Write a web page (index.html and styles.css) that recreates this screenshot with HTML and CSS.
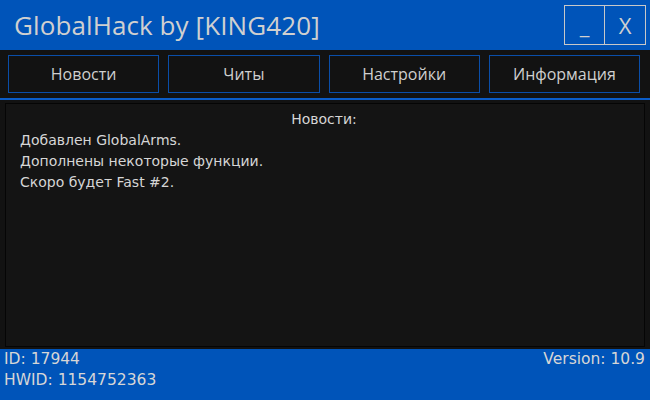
FILE: index.html
```html
<!DOCTYPE html>
<html lang="ru">
<head>
<meta charset="utf-8">
<title>GlobalHack</title>
<link rel="stylesheet" href="styles.css">
</head>
<body>
<div class="app">
  <header class="titlebar">
    <div class="title">GlobalHack by [KING420]</div>
    <div class="winbtns">
      <div class="winbtn">_</div>
      <div class="winbtn">X</div>
    </div>
  </header>
  <nav class="nav">
    <div class="tab">Новости</div>
    <div class="tab">Читы</div>
    <div class="tab">Настройки</div>
    <div class="tab">Информация</div>
  </nav>
  <main class="content">
    <div class="panel">
      <div class="panel-title">Новости:</div>
      <div class="line">Добавлен GlobalArms.</div>
      <div class="line">Дополнены некоторые функции.</div>
      <div class="line">Скоро будет Fast #2.</div>
    </div>
  </main>
  <footer class="footer">
    <div class="footer-left">
      <div>ID: 17944</div>
      <div>HWID: 1154752363</div>
    </div>
    <div class="footer-right">Version: 10.9</div>
  </footer>
</div>
</body>
</html>
```
FILE: styles.css
```css
html, body {
  margin: 0;
  padding: 0;
  background: #121212;
}
body {
  font-family: "DejaVu Sans", Verdana, sans-serif;
  color: #d4d4d4;
}
.app {
  width: 650px;
  height: 400px;
  display: flex;
  flex-direction: column;
  background: #121212;
}
.titlebar {
  height: 50px;
  background: #0054b9;
  display: flex;
  justify-content: space-between;
  align-items: flex-start;
  box-sizing: border-box;
  padding: 5px 4px 0 14px;
}
.title {
  font-family: "Open Sans", "Noto Sans", sans-serif;
  font-size: 26px;
  color: #d0d0d0;
  line-height: 40px;
  letter-spacing: 0.1px;
}
.winbtns {
  display: flex;
}
.winbtn {
  width: 41px;
  height: 40px;
  box-sizing: border-box;
  border: 1px solid #c8c8c8;
  display: flex;
  align-items: center;
  justify-content: center;
  font-family: "Open Sans", "Noto Sans", sans-serif;
  font-size: 22px;
  color: #d0d0d0;
}
.winbtn + .winbtn {
  border-left: none;
}
.nav {
  height: 50px;
  box-sizing: border-box;
  padding: 5px 10px 5px 8px;
  display: grid;
  grid-template-columns: repeat(4, 1fr);
  column-gap: 9px;
  border-bottom: 2px solid #0a5cc8;
}
.tab {
  border: 1px solid #0a4ea8;
  background: #121212;
  display: flex;
  align-items: center;
  justify-content: center;
  font-family: "Open Sans", "Noto Sans", sans-serif;
  font-size: 16px;
  color: #cfcfcf;
}
.content {
  flex: 1;
  padding: 3px 5px 2px 5px;
  display: flex;
}
.panel {
  flex: 1;
  border: 1px solid #050505;
  background: #141414;
  padding: 5px 14px 4px;
  font-size: 14px;
  line-height: 21px;
  color: #d6d6d6;
}
.panel-title {
  text-align: center;
  margin-right: 2px;
}
.footer {
  height: 51px;
  background: #0054b9;
  box-sizing: border-box;
  padding: 0 5px 0 4px;
  display: flex;
  justify-content: space-between;
  align-items: flex-start;
  font-size: 15.5px;
  line-height: 21px;
  color: #d6d6d6;
}
```
